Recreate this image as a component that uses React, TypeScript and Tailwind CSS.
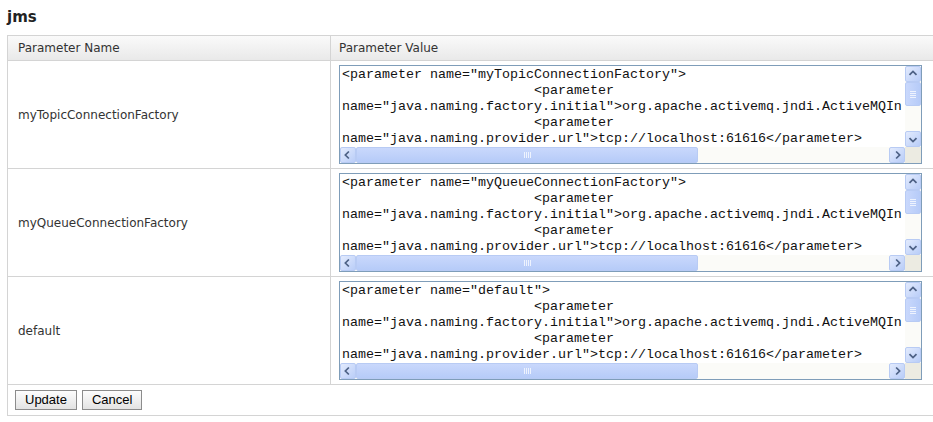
import React from "react"

interface Param {
  name: string
  lines: string[]
}

const INDENT = "                        "

// visible part of the textarea content (scrolled view)
const bodyLines = [
  INDENT + "<parameter",
  'name="java.naming.factory.initial">org.apache.activemq.jndi.ActiveMQIn',
  INDENT + "<parameter",
  'name="java.naming.provider.url">tcp://localhost:61616</parameter>',
]

const params: Param[] = [
  { name: "myTopicConnectionFactory", lines: ['<parameter name="myTopicConnectionFactory">', ...bodyLines] },
  { name: "myQueueConnectionFactory", lines: ['<parameter name="myQueueConnectionFactory">', ...bodyLines] },
  { name: "default", lines: ['<parameter name="default">', ...bodyLines] },
]

// XP style scrollbar button
function ScrollButton({ dir }: { dir: "up" | "down" | "left" | "right" }) {
  const paths = {
    up: "M4 9 L8 5 L12 9",
    down: "M4 7 L8 11 L12 7",
    left: "M9 4 L5 8 L9 12",
    right: "M7 4 L11 8 L7 12",
  }
  return (
    <div className="w-[16px] h-[16px] shrink-0 rounded-[2px] border border-[#b8cbf4] bg-gradient-to-br from-[#e3ebfd] to-[#b9cdf8] flex items-center justify-center">
      <svg width="16" height="16" viewBox="0 0 16 16">
        <path d={paths[dir]} fill="none" stroke="#4d6185" strokeWidth="2" />
      </svg>
    </div>
  )
}

function FakeTextarea({ lines }: { lines: string[] }) {
  return (
    <div className="w-[583px] h-[99px] border border-[#7f9db9] bg-white flex flex-col">
      <div className="flex flex-1 min-h-0">
        <div className="flex-1 overflow-hidden pl-[2px] pt-[1px] font-['Liberation_Mono',monospace] text-[13.33px] leading-[16px] text-[#111] whitespace-pre">
          {lines.map((l, i) => (
            <div key={i}>{l}</div>
          ))}
        </div>
        {/* vertical scrollbar */}
        <div className="w-[16px] bg-[#fbfbf8] flex flex-col">
          <ScrollButton dir="up" />
          <div className="h-[24px] rounded-[2px] border border-[#b8cbf4] bg-gradient-to-r from-[#c9d8fc] to-[#b6cbf8] flex flex-col items-center justify-center gap-[1px]">
            <div className="w-[6px] h-[1px] bg-[#eef3fe]" />
            <div className="w-[6px] h-[1px] bg-[#eef3fe]" />
            <div className="w-[6px] h-[1px] bg-[#eef3fe]" />
            <div className="w-[6px] h-[1px] bg-[#eef3fe]" />
          </div>
          <div className="flex-1" />
          <ScrollButton dir="down" />
        </div>
      </div>
      {/* horizontal scrollbar */}
      <div className="flex h-[16px]">
        <div className="flex-1 flex bg-[#fbfbf8]">
          <ScrollButton dir="left" />
          <div className="w-[342px] rounded-[2px] border border-[#b8cbf4] bg-gradient-to-b from-[#c9d8fc] to-[#b6cbf8] flex items-center justify-center gap-[1px]">
            <div className="w-[1px] h-[6px] bg-[#eef3fe]" />
            <div className="w-[1px] h-[6px] bg-[#eef3fe]" />
            <div className="w-[1px] h-[6px] bg-[#eef3fe]" />
            <div className="w-[1px] h-[6px] bg-[#eef3fe]" />
          </div>
          <div className="flex-1" />
          <ScrollButton dir="right" />
        </div>
        <div className="w-[16px] bg-[#ecebe2]" />
      </div>
    </div>
  )
}

export default function App() {
  return (
    <div className="w-[933px] h-[422px] overflow-hidden bg-white font-['DejaVu_Sans',sans-serif] text-[#333]">
      <h2 className="pl-[7px] pt-[8px] h-[35px] text-[15px] font-bold text-[#222] leading-[18px]">jms</h2>

      <div className="ml-[7px] w-[940px] border-l border-t border-b border-[#d4d4d4]">
        {/* Header */}
        <div className="flex h-[25px] border-b border-[#d4d4d4] bg-gradient-to-b from-[#fafafa] to-[#e9e9e9] text-[12px] text-[#333]">
          <div className="w-[323px] pl-[10px] flex items-center border-r border-[#d4d4d4]">Parameter Name</div>
          <div className="flex-1 pl-[8px] flex items-center">Parameter Value</div>
        </div>

        {/* Rows */}
        {params.map((p) => (
          <div key={p.name} className="flex h-[108px] border-b border-[#d4d4d4] text-[12px]">
            <div className="w-[323px] pl-[10px] flex items-center border-r border-[#d4d4d4]">{p.name}</div>
            <div className="flex-1 pl-[8px] pt-[4px]">
              <FakeTextarea lines={p.lines} />
            </div>
          </div>
        ))}

        {/* Buttons */}
        <div className="flex gap-[5px] pl-[7px] pt-[5px] h-[30px]">
          <button className="h-[20px] px-[9px] border border-[#8c8c8c] bg-gradient-to-b from-[#fdfdfd] to-[#e3e3e3] font-['Liberation_Sans',sans-serif] text-[13px] leading-[18px] text-black">
            Update
          </button>
          <button className="h-[20px] px-[9px] border border-[#8c8c8c] bg-gradient-to-b from-[#fdfdfd] to-[#e3e3e3] font-['Liberation_Sans',sans-serif] text-[13px] leading-[18px] text-black">
            Cancel
          </button>
        </div>
      </div>
    </div>
  )
}
